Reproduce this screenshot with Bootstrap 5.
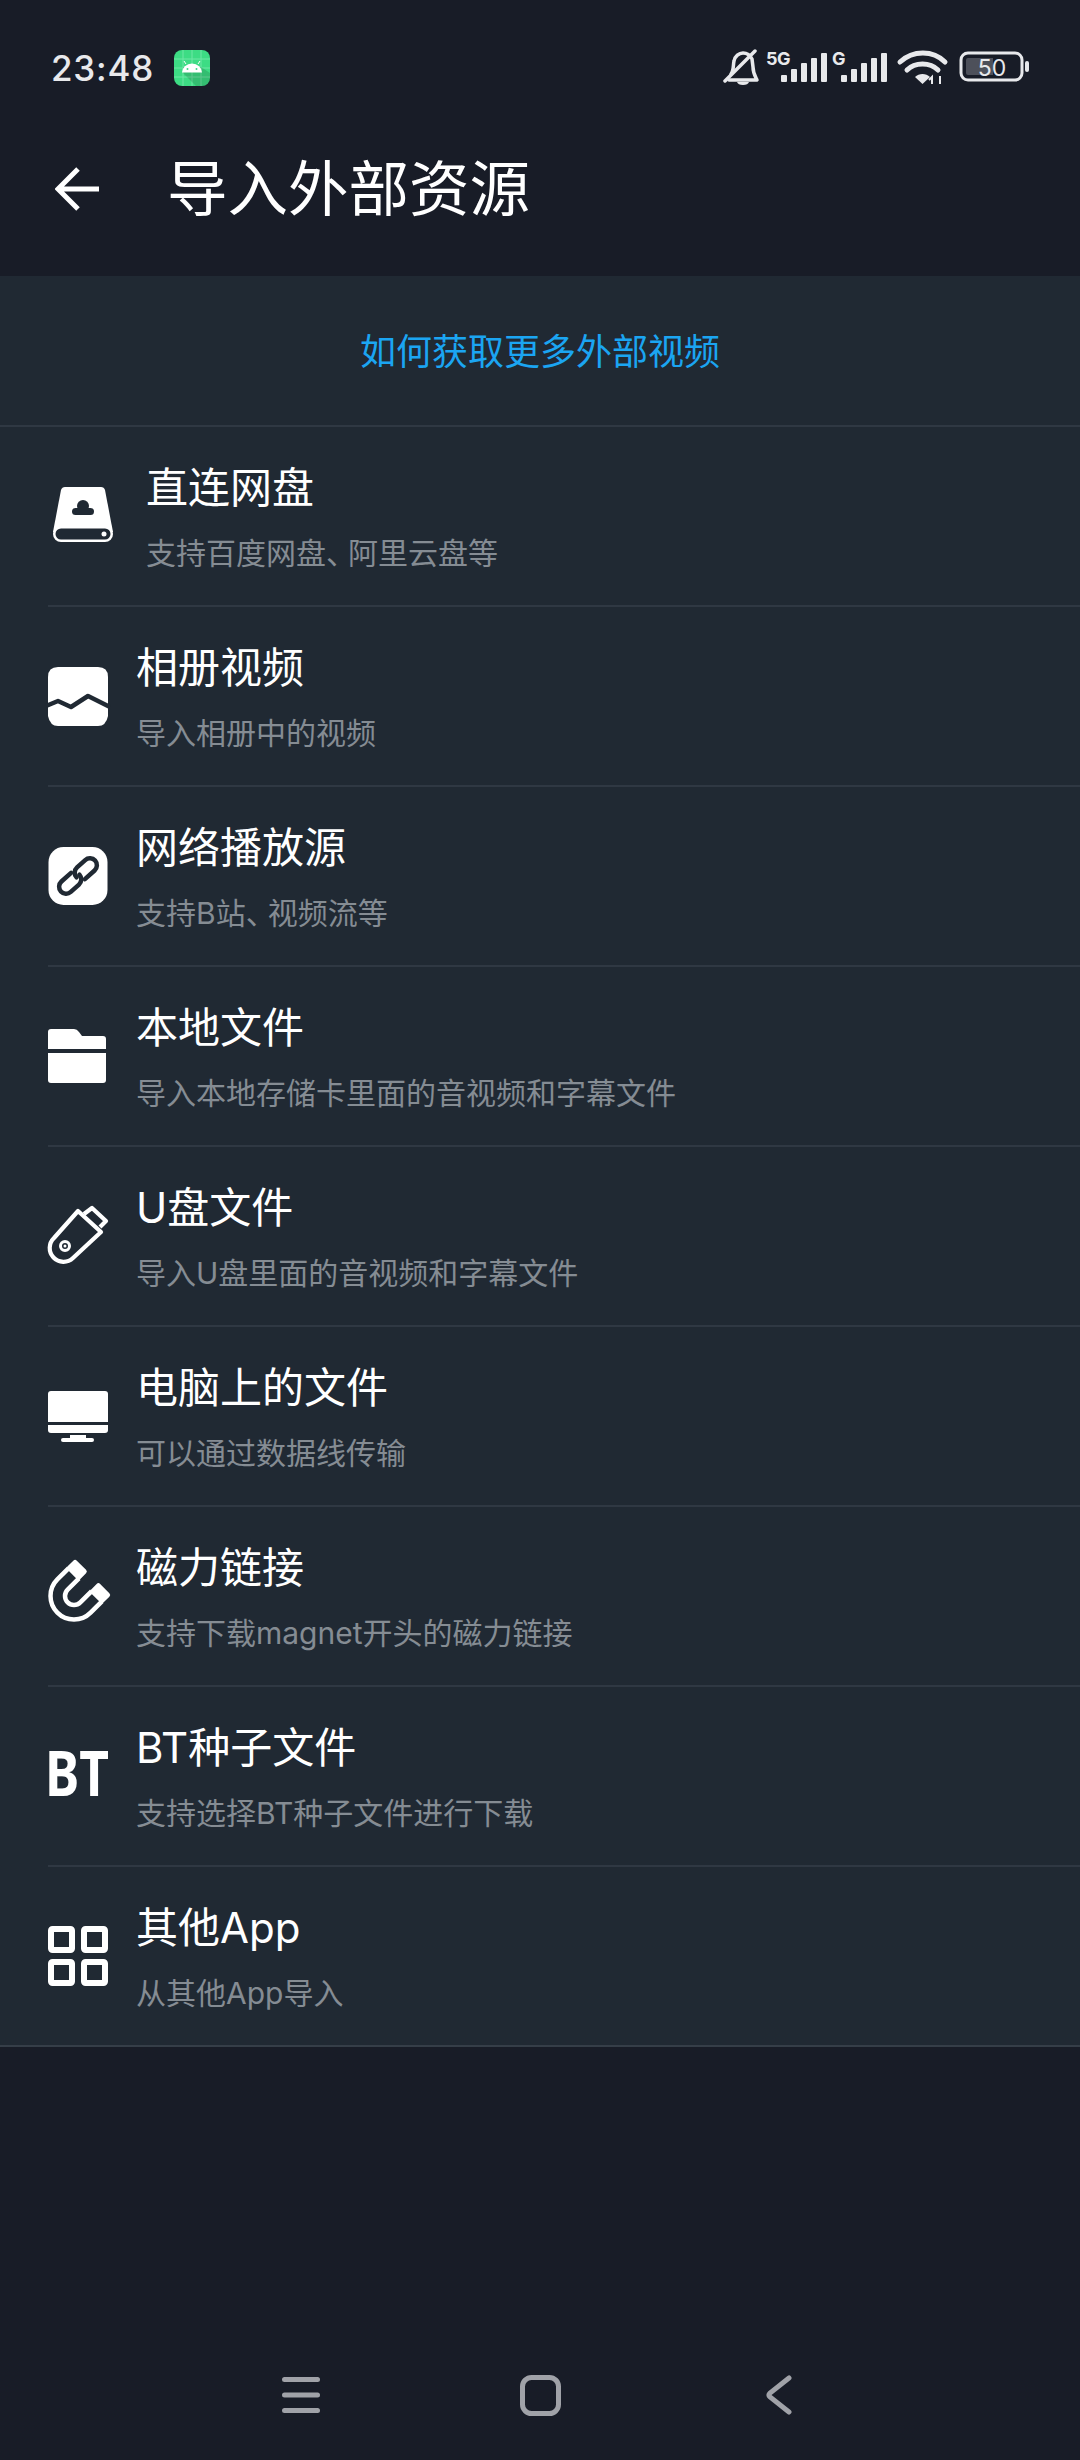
<!DOCTYPE html>
<html lang="zh-CN">
<head>
<meta charset="UTF-8">
<meta name="viewport" content="width=device-width, initial-scale=1.0">
<title>导入外部资源</title>
<link href="https://cdn.jsdelivr.net/npm/bootstrap@5.3.0/dist/css/bootstrap.min.css" rel="stylesheet">
<style>
    body {
        background: #181c27;
        color: #fff;
        font-family: Inter, "Noto Sans CJK SC", sans-serif;
        width: 1080px;
        min-height: 2460px;
    }
    .status-row { height: 136px; padding: 0 51px 0 51px; }
    .clock { font-size: 35px; font-weight: 500; color: #e8e9ec; line-height: 1; letter-spacing: .8px; margin-right: 20px; }
    .tool-row { height: 140px; padding: 0 0 34px 55px; }
    .page-title { font-size: 60.5px; font-weight: 400; line-height: 1; margin: 0 0 0 68px; }
    .panel-box { background: #202933; border-bottom: 2px solid #353e48; }
    .help-link {
        display: block; height: 151px; line-height: 152px; text-align: center;
        font-size: 36px; color: #1ba5f2; text-decoration: none;
        border-bottom: 2px solid #2f3843;
    }
    .panel-box .list-group-item {
        background: transparent; color: #fff; border: 0; border-radius: 0;
        padding: 0 0 0 48px;
    }
    .row-inner { height: 180px; border-bottom: 2px solid #2f3843; gap: 28px; }
    .panel-box .list-group-item:last-child .row-inner { border-bottom: 0; height: 178px; }
    .row-icon { width: 60px; height: 60px; flex: none; display: block; overflow: visible; }
    .first-icon { margin-left: 5px; margin-right: 5px; }
    .row-title { font-size: 42px; line-height: 56px; margin-bottom: 17px; }
    .row-sub { font-size: 30px; line-height: 40px; color: #858c93; }
    .tight-mark { letter-spacing: -8px; }
    .nav-keys { height: 130px; }
    .nav-slot { width: 239px; }
</style>
</head>
<body class="d-flex flex-column">

<div class="status-row d-flex align-items-center">
    <span class="clock">23:48</span>
    <svg width="36" height="36" viewBox="0 0 36 36">
        <rect width="36" height="36" rx="8" fill="#3ddc84"/>
        <path d="M0 9H36M0 18H36M0 27H36M9 0V36M18 0V36M27 0V36" stroke="#6fe7a5" stroke-width="1"/>
        <path d="M9 23L22 36H28Q36 36 36 28V23L27 17H9Z" fill="#000" opacity=".14"/>
        <path d="M8 22.5a10 9 0 0 1 20 0Z" fill="#fff"/>
        <path d="M12 14l-2-3M24 14l2-3" stroke="#fff" stroke-width="1"/>
        <circle cx="13.5" cy="19" r="1" fill="#3ddc84"/><circle cx="22.5" cy="19" r="1" fill="#3ddc84"/>
    </svg>
    <div class="ms-auto d-flex align-items-center">
        <svg width="306" height="40" viewBox="0 0 306 40" fill="#e8e9ec">
            <g fill="none" stroke="#e8e9ec" stroke-width="3.500" stroke-linecap="round" stroke-linejoin="round">
                <path d="M8 26c3-4 2-9 3-13 1-5 5-8 9-8 4 0 7 2 9 6l1 8c0 6 2 9 4 13H6"/>
                <path d="M2 33L32 3"/>
            </g>
            <path d="M14 34h12q-1 3-6 3t-6-3Z"/>
            <text x="43" y="17" font-family="Inter" font-weight="700" font-size="18" letter-spacing="-.5">5G</text>
            <rect x="58" y="27" width="6" height="7" rx="1"/><rect x="68" y="21" width="6" height="13" rx="1"/><rect x="78" y="15" width="6" height="19" rx="1"/><rect x="88" y="10" width="6" height="24" rx="1"/><rect x="98" y="5" width="6" height="29" rx="1"/>
            <text x="109" y="17" font-family="Inter" font-weight="700" font-size="18">G</text>
            <rect x="118" y="27" width="6" height="7" rx="1"/><rect x="128" y="21" width="6" height="13" rx="1"/><rect x="138" y="15" width="6" height="19" rx="1"/><rect x="148" y="10" width="6" height="24" rx="1"/><rect x="158" y="5" width="6" height="29" rx="1"/>
            <g fill="none" stroke="#e8e9ec" stroke-width="5" stroke-linecap="round">
                <path d="M177 14c13-12 33-12 45 0"/>
                <path d="M184 22c8-8 23-8 31 0"/>
            </g>
            <path d="M192 29c4-4 11-4 15 0l-7.500 7Z"/>
            <path d="M209 36v-7l-3 3M217 28v8" stroke="#e8e9ec" stroke-width="2" fill="none"/>
            <rect x="238" y="5" width="61" height="27" rx="7" fill="none" stroke="#e8e9ec" stroke-width="3"/>
            <path d="M245 10h25v17h-25q-2 0-2-2V12q0-2 2-2Z" fill="#4d505a"/>
            <rect x="302" y="13" width="4" height="11" rx="2"/>
            <text x="269" y="28" text-anchor="middle" font-family="Inter" font-size="23">50</text>
        </svg>
    </div>
</div>

<div class="tool-row d-flex align-items-center">
    <svg width="44" height="44" viewBox="0 0 44 44" fill="none" stroke="#fff" stroke-width="5"><path d="M44 22H4M23 2L3 22L23 42"/></svg>
    <h1 class="page-title">导入外部资源</h1>
</div>

<div class="panel-box">
    <a class="help-link" href="#">如何获取更多外部视频</a>
    <ul class="list-group list-group-flush">
        <li class="list-group-item">
            <div class="row-inner d-flex align-items-center">
                <svg class="row-icon first-icon" viewBox="0 0 60 60">
                    <path d="M12 1H48Q51 1 52 4L60 46H0L8 4Q9 1 12 1Z" fill="#fff"/>
                    <rect x="0" y="40" width="60" height="16" rx="8" fill="#fff"/>
                    <rect x="2.500" y="42.500" width="55" height="11" rx="5.500" fill="#202933"/>
                    <circle cx="51" cy="48" r="2.500" fill="#fff"/>
                    <circle cx="30" cy="20" r="6" fill="#202933"/>
                    <rect x="19" y="22" width="22" height="7" rx="3.500" fill="#202933"/>
                </svg>
                <div>
                    <div class="row-title">直连网盘</div>
                    <div class="row-sub">支持百度网盘<span class="tight-mark">、</span>阿里云盘等</div>
                </div>
            </div>
        </li>
        <li class="list-group-item">
            <div class="row-inner d-flex align-items-center">
                <svg class="row-icon" viewBox="0 0 60 60">
                    <path d="M10 1H50Q60 1 60 11V50Q58 60 50 60H10Q2 60 0 50V11Q0 1 10 1Z" fill="#fff"/>
                    <path d="M-2 40L10 35L23 41L40 30L62 41" fill="none" stroke="#202933" stroke-width="4.500" stroke-linejoin="round"/>
                </svg>
                <div>
                    <div class="row-title">相册视频</div>
                    <div class="row-sub">导入相册中的视频</div>
                </div>
            </div>
        </li>
        <li class="list-group-item">
            <div class="row-inner d-flex align-items-center">
                <svg class="row-icon" viewBox="0 0 60 60">
                    <rect x="0.500" y="1" width="59" height="58" rx="15" fill="#fff"/>
                    <g transform="rotate(-42 30 30)" fill="none" stroke="#202933" stroke-width="4.500" stroke-linecap="round">
                        <path d="M27 23H14a7 7 0 0 0 0 14H25a7 7 0 0 0 7-7"/>
                        <path d="M33 37H46a7 7 0 0 0 0-14H35a7 7 0 0 0-7 7"/>
                    </g>
                </svg>
                <div>
                    <div class="row-title">网络播放源</div>
                    <div class="row-sub">支持B站<span class="tight-mark">、</span>视频流等</div>
                </div>
            </div>
        </li>
        <li class="list-group-item">
            <div class="row-inner d-flex align-items-center">
                <svg class="row-icon" viewBox="0 0 60 60" fill="#fff">
                    <path d="M3 3H26Q29 3 31 6L34 10H55Q58 10 58 13V23H0V6Q0 3 3 3Z"/>
                    <path d="M0 27H58V54Q58 57 55 57H3Q0 57 0 54Z"/>
                </svg>
                <div>
                    <div class="row-title">本地文件</div>
                    <div class="row-sub">导入本地存储卡里面的音视频和字幕文件</div>
                </div>
            </div>
        </li>
        <li class="list-group-item">
            <div class="row-inner d-flex align-items-center">
                <svg class="row-icon" viewBox="0 0 60 60" fill="none" stroke="#fff" stroke-width="4.200" stroke-linejoin="round">
                    <path d="M30 5L53 26L25 52A13.500 13.500 0 0 1 6 32Z"/>
                    <path d="M36 8L44 2L58 15L52 21"/>
                    <circle cx="17" cy="40" r="4.500" stroke-width="3"/>
                    <circle cx="17" cy="40" r="1.500" fill="#fff" stroke="none"/>
                </svg>
                <div>
                    <div class="row-title">U盘文件</div>
                    <div class="row-sub">导入U盘里面的音视频和字幕文件</div>
                </div>
            </div>
        </li>
        <li class="list-group-item">
            <div class="row-inner d-flex align-items-center">
                <svg class="row-icon" viewBox="0 0 60 60" fill="#fff">
                    <path d="M3 5H57Q60 5 60 8V36H0V8Q0 5 3 5Z"/>
                    <path d="M0 39H60V44Q60 47 57 47H3Q0 47 0 44Z"/>
                    <rect x="22" y="49" width="16" height="4"/>
                    <rect x="13" y="52" width="33" height="4" rx="2"/>
                </svg>
                <div>
                    <div class="row-title">电脑上的文件</div>
                    <div class="row-sub">可以通过数据线传输</div>
                </div>
            </div>
        </li>
        <li class="list-group-item">
            <div class="row-inner d-flex align-items-center">
                <svg class="row-icon" viewBox="0 0 60 60">
                    <g transform="translate(26 30) rotate(45)">
                        <path d="M-23.500 -16V0A23.500 23.500 0 0 0 23.500 0V-16M-9 -16V0A9 9 0 0 0 9 0V-16" fill="none" stroke="#fff" stroke-width="4.500"/>
                        <rect x="-25.500" y="-27" width="18" height="13" rx="2.500" fill="#fff"/>
                        <rect x="7.500" y="-27" width="18" height="13" rx="2.500" fill="#fff"/>
                    </g>
                </svg>
                <div>
                    <div class="row-title">磁力链接</div>
                    <div class="row-sub">支持下载magnet开头的磁力链接</div>
                </div>
            </div>
        </li>
        <li class="list-group-item">
            <div class="row-inner d-flex align-items-center">
                <svg class="row-icon" viewBox="0 0 60 60">
                    <text x="-3" y="50" font-family="Noto Sans" font-weight="700" font-size="62" fill="#fff" textLength="64" lengthAdjust="spacingAndGlyphs">BT</text>
                </svg>
                <div>
                    <div class="row-title">BT种子文件</div>
                    <div class="row-sub">支持选择BT种子文件进行下载</div>
                </div>
            </div>
        </li>
        <li class="list-group-item">
            <div class="row-inner d-flex align-items-center">
                <svg class="row-icon" viewBox="0 0 60 60" fill="none" stroke="#fff" stroke-width="6">
                    <rect x="3" y="3" width="21" height="21" rx="1.500"/>
                    <rect x="36" y="3" width="21" height="21" rx="1.500"/>
                    <rect x="3" y="36" width="21" height="21" rx="1.500"/>
                    <rect x="36" y="36" width="21" height="21" rx="1.500"/>
                </svg>
                <div>
                    <div class="row-title">其他App</div>
                    <div class="row-sub">从其他App导入</div>
                </div>
            </div>
        </li>
    </ul>
</div>

<div class="nav-keys mt-auto d-flex justify-content-center align-items-center">
    <div class="nav-slot d-flex justify-content-center">
        <svg width="38" height="36" viewBox="0 0 38 36" fill="#a0a2a8"><rect y="0" width="38" height="5" rx="2.500"/><rect y="15.500" width="38" height="5" rx="2.500"/><rect y="31" width="38" height="5" rx="2.500"/></svg>
    </div>
    <div class="nav-slot d-flex justify-content-center">
        <svg width="41" height="41" viewBox="0 0 41 41"><rect x="2.500" y="2.500" width="36" height="36" rx="9" fill="none" stroke="#a0a2a8" stroke-width="5"/></svg>
    </div>
    <div class="nav-slot d-flex justify-content-center">
        <svg width="26" height="40" viewBox="0 0 26 40"><path d="M23 3L4 18Q2 20 4 22L23 37" fill="none" stroke="#a0a2a8" stroke-width="5" stroke-linecap="round"/></svg>
    </div>
</div>

<script src="https://cdn.jsdelivr.net/npm/bootstrap@5.3.0/dist/js/bootstrap.bundle.min.js"></script>
</body>
</html>
